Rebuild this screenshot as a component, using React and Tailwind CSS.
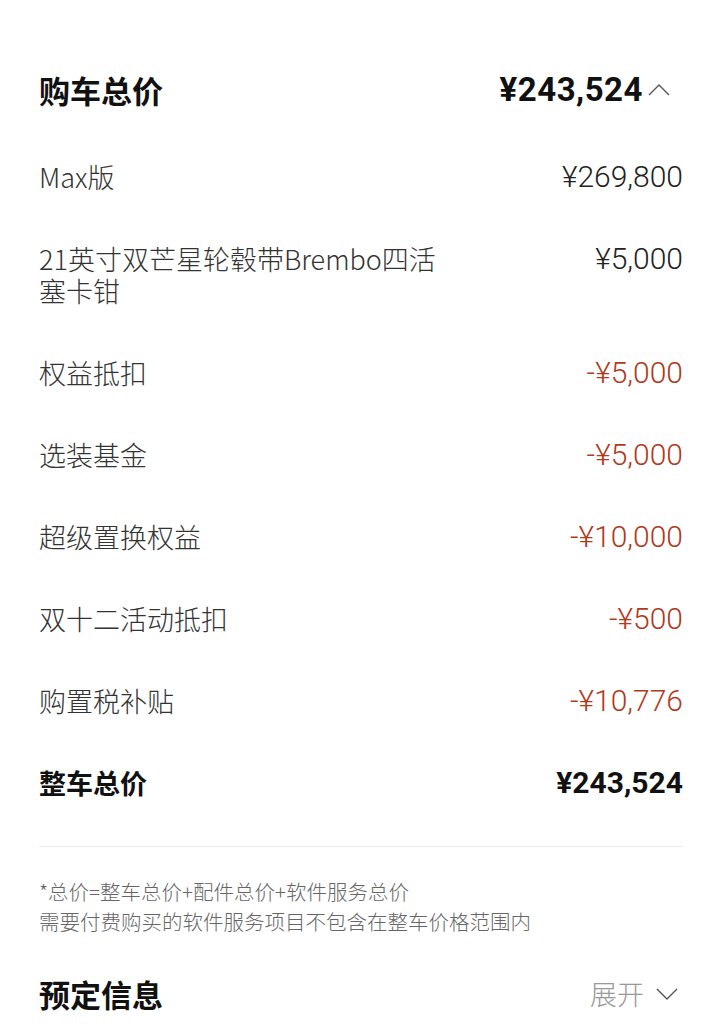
const font = { fontFamily: '"Noto Sans CJK SC", "Noto Sans", sans-serif' };

const items = [
  { label: "Max版", price: "¥269,800" },
  { label: "21英寸双芒星轮毂带Brembo四活塞卡钳", price: "¥5,000" },
  { label: "权益抵扣", price: "-¥5,000", off: true },
  { label: "选装基金", price: "-¥5,000", off: true },
  { label: "超级置换权益", price: "-¥10,000", off: true },
  { label: "双十二活动抵扣", price: "-¥500", off: true },
  { label: "购置税补贴", price: "-¥10,776", off: true },
];

function Chevron({ up }) {
  return (
    <svg width="22" height="14" viewBox="0 0 22 14" fill="none" className="text-[#555]">
      <path
        d={up ? "M1 12L11 2L21 12" : "M1 2L11 12L21 2"}
        stroke="currentColor"
        strokeWidth="1.4"
      />
    </svg>
  );
}

export default function App() {
  return (
    <div className="min-h-screen bg-white pl-[39px] pr-[23px] pt-[70px]" style={font}>
      {/* header */}
      <div className="flex h-[40px] items-center justify-between">
        <h2 className="text-[31px] font-bold text-[#111]">购车总价</h2>
        <div className="flex items-center gap-[5px]">
          <span className="font-['Roboto'] text-[33px] font-bold tracking-[0.5px] text-[#111]">
            ¥243,524
          </span>
          <Chevron up />
          <span className="w-[8px]" />
        </div>
      </div>

      {/* line items */}
      <div className="mt-[26px]">
        {items.map((it) => (
          <div key={it.label} className="flex items-start justify-between py-[25px] text-[27px] leading-[32px]">
            <span className="max-w-[410px] font-light text-[#333]">{it.label}</span>
            <span
              className={`font-['Roboto'] text-[30px] font-light ${it.off ? "text-[#b03a1c]" : "text-[#222]"}`}
            >
              {it.price}
            </span>
          </div>
        ))}
        <div className="flex items-center justify-between py-[25px] leading-[32px]">
          <span className="text-[27px] font-bold text-[#111]">整车总价</span>
          <span className="font-['Roboto'] text-[30px] font-bold text-[#111]">¥243,524</span>
        </div>
      </div>

      <div className="mt-[22px] h-px bg-[#ececec]" />

      <div className="pt-[29px] text-[20.5px] font-light leading-[30px] text-[#666]">
        <p>*总价=整车总价+配件总价+软件服务总价</p>
        <p>需要付费购买的软件服务项目不包含在整车价格范围内</p>
      </div>

      <div className="mt-[38px] flex h-[40px] items-center justify-between">
        <h2 className="text-[31px] font-bold text-[#111]">预定信息</h2>
        <div className="mr-[5px] flex items-center gap-[12px]">
          <span className="text-[27px] font-light text-[#999]">展开</span>
          <Chevron />
        </div>
      </div>
    </div>
  );
}
